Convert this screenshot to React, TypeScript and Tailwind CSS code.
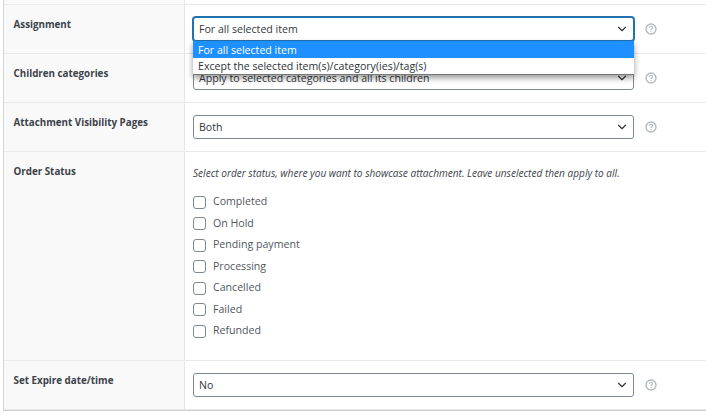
import { ChevronDown } from "lucide-react";

const font = { fontFamily: '"Open Sans", "Noto Sans", sans-serif' };

const statuses = ["Completed", "On Hold", "Pending payment", "Processing", "Cancelled", "Failed", "Refunded"];

function Help() {
  return (
    <svg width="12" height="12" viewBox="0 0 12 12" fill="none" className="shrink-0">
      <circle cx="6" cy="6" r="5" stroke="#b4b9be" strokeWidth="1.4" />
      <path d="M4.4 4.7C4.5 3.8 5.2 3.3 6 3.3C6.9 3.3 7.6 3.9 7.6 4.7C7.6 5.7 6 5.8 6 7" stroke="#b4b9be" strokeWidth="1.1" />
      <rect x="5.4" y="8" width="1.2" height="1.2" fill="#b4b9be" />
    </svg>
  );
}

function Select({ value, focused }: { value: string; focused?: boolean }) {
  return (
    <div className="flex items-center gap-[11px]">
      <div
        className={`flex h-[24px] w-[441px] items-center justify-between rounded-[3px] border bg-white pl-[5px] pr-[4px] text-[10.6px] text-[#32373c] ${
          focused ? "border-[#2271b1] shadow-[0_0_0_1px_#2271b1]" : "border-[#7e8993]"
        }`}
      >
        <span className="pt-[1px]">{value}</span>
        <ChevronDown size={14} strokeWidth={2} color="#32373c" />
      </div>
      <Help />
    </div>
  );
}

function Row({ label, children }: { label: string; children: React.ReactNode }) {
  return (
    <div className="flex border-b border-[#e9e9e9]">
      <div className="w-[181px] shrink-0 border-r border-[#e5e5e5] bg-[#f9f9f9] pl-[9.5px] pt-[13px] text-[9.8px] font-bold leading-[14px] text-[#3c434a]">
        {label}
      </div>
      <div className="min-w-0 flex-1 pl-[8px]">{children}</div>
    </div>
  );
}

export default function App() {
  return (
    <div className="relative h-[415px] w-[706px] overflow-hidden bg-white" style={font}>
      <div className="ml-[3px] border-b border-l border-b-[#cfcfcf] border-l-[#d5d5d5]">
        <div className="flex h-[5px] border-b border-[#e9e9e9]">
          <div className="w-[181px] border-r border-[#e5e5e5] bg-[#f9f9f9]" />
        </div>
        <Row label="Assignment">
          <div className="flex h-[48px] items-center">
            <Select value="For all selected item" focused />
          </div>
        </Row>
        <Row label="Children categories">
          <div className="flex h-[48px] items-center">
            <Select value="Apply to selected categories and all its children" />
          </div>
        </Row>
        <Row label="Attachment Visibility Pages">
          <div className="flex h-[48px] items-center">
            <Select value="Both" />
          </div>
        </Row>
        <Row label="Order Status">
          <div className="h-[208px] pt-[14.5px]">
            <p className="text-[10.1px] italic leading-[13px] text-[#3c434a]">
              Select order status, where you want to showcase attachment. Leave unselected then apply to all.
            </p>
            <div className="mt-[16.2px] flex flex-col gap-[8.5px]">
              {statuses.map((s) => (
                <label key={s} className="flex h-[13px] items-center gap-[7px] text-[10.6px] text-[#50575e]">
                  <span className="h-[13px] w-[13px] rounded-[3px] border border-[#7e8993] bg-white" />
                  {s}
                </label>
              ))}
            </div>
          </div>
        </Row>
        <Row label="Set Expire date/time">
          <div className="flex h-[48px] items-center pt-[0.6px]">
            <Select value="No" />
          </div>
        </Row>
      </div>

      {/* open select menu */}
      <div className="absolute left-[193px] top-[41px] w-[441px] border-b border-[#767676] bg-white text-[10.6px] leading-[16px] text-[#2c3338] shadow-[0_3px_6px_rgba(0,0,0,0.4)]">
        <div className="h-[17px] bg-[#1e90ff] pl-[5px] pt-[1px] text-white">For all selected item</div>
        <div className="h-[16px] pl-[5px]">Except the selected item(s)/category(ies)/tag(s)</div>
      </div>
    </div>
  );
}
